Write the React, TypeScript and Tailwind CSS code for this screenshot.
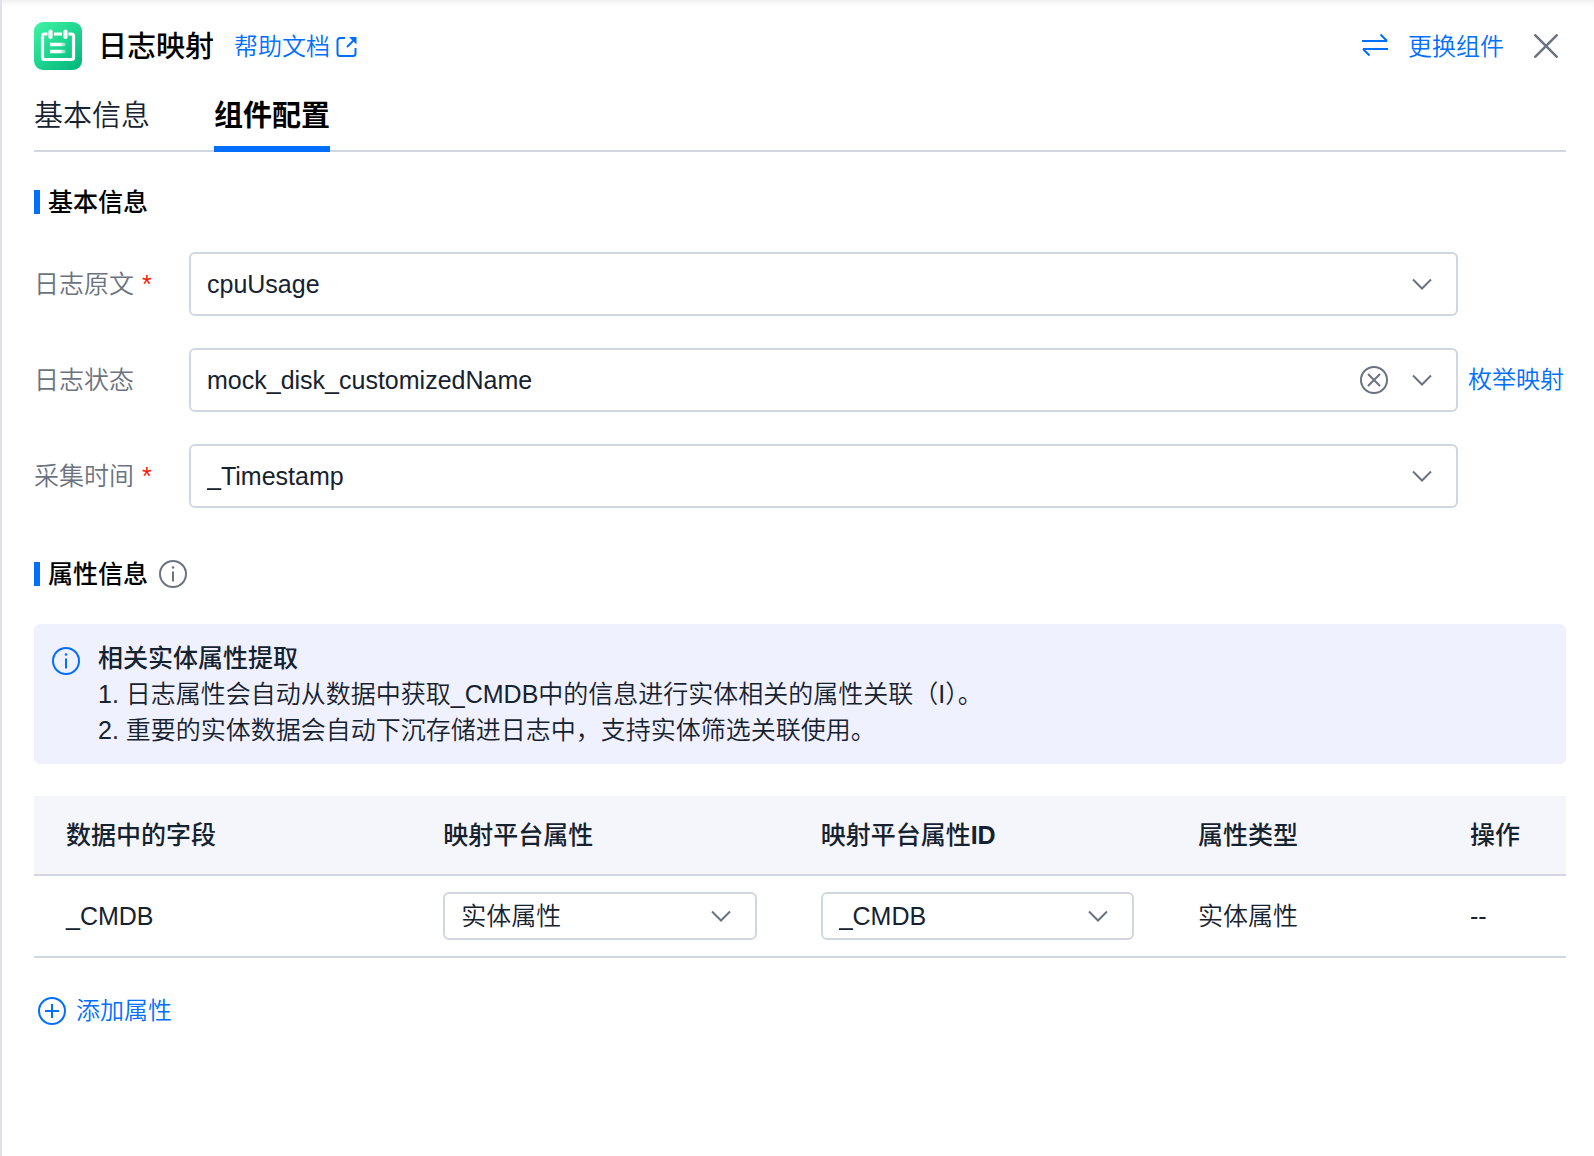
import React, { useState } from 'react';

const fontStack = "font-['Liberation_Sans','Noto_Sans_CJK_SC',sans-serif]";

const sourceFields = [
  { id: 'raw', label: '日志原文', required: true, value: 'cpuUsage' },
  { id: 'status', label: '日志状态', required: false, value: 'mock_disk_customizedName', clearable: true, link: '枚举映射' },
  { id: 'time', label: '采集时间', required: true, value: '_Timestamp' },
];

const attributes = [
  { field: '_CMDB', attr: '实体属性', attrId: '_CMDB', type: '实体属性' },
];

function LogoIcon() {
  return (
    <svg width="48" height="48" viewBox="0 0 48 48" fill="none" aria-hidden="true">
      <defs>
        <linearGradient id="logo-bg" x1="4" y1="0" x2="44" y2="48" gradientUnits="userSpaceOnUse">
          <stop stopColor="#3df2a4" />
          <stop offset="1" stopColor="#00b87c" />
        </linearGradient>
        <linearGradient id="logo-line" x1="16" y1="0" x2="32" y2="0" gradientUnits="userSpaceOnUse">
          <stop stopColor="#fff" />
          <stop offset="0.6" stopColor="#fff" />
          <stop offset="1" stopColor="#fff" stopOpacity="0.3" />
        </linearGradient>
      </defs>
      <rect width="48" height="48" rx="9" fill="url(#logo-bg)" />
      <path
        d="M13.5 12H10.5a2 2 0 0 0-2 2v21.500a2 2 0 0 0 2 2h27a2 2 0 0 0 2-2V14a2 2 0 0 0-2-2h-3M20 12h8"
        stroke="#fff"
        strokeWidth="3.200"
      />
      <path d="M16.500 9.500v5.500M31.500 9.500v5.500" stroke="#fff" strokeWidth="4.200" strokeLinecap="round" />
      <path d="M16 22.500h15.500M16 29.500h15.500" stroke="url(#logo-line)" strokeWidth="3.400" />
    </svg>
  );
}

function ExternalIcon() {
  return (
    <svg width="22" height="22" viewBox="0 0 22 22" fill="none" stroke="currentColor" strokeWidth="2" aria-hidden="true">
      <path d="M9 2H4a2.500 2.500 0 0 0-2.500 2.500v13A2.500 2.500 0 0 0 4 20h13a2.500 2.500 0 0 0 2.500-2.500V12" />
      <path d="M11 11l7-7" />
      <path d="M13 1h7.500v7.500z" fill="currentColor" stroke="none" />
    </svg>
  );
}

function SwapIcon() {
  return (
    <svg width="26" height="28" viewBox="0 0 26 28" fill="none" stroke="currentColor" strokeWidth="2" aria-hidden="true">
      <path d="M0 8h25M18.500 1.500L25 8M26 16H1M7.500 22.500L1 16" />
    </svg>
  );
}

function ChevronIcon() {
  return (
    <svg width="20" height="12" viewBox="0 0 20 12" fill="none" stroke="currentColor" strokeWidth="2" aria-hidden="true">
      <path d="M1 1.500l9 9 9-9" />
    </svg>
  );
}

function InfoIcon() {
  return (
    <svg width="28" height="28" viewBox="0 0 28 28" fill="none" stroke="currentColor" strokeWidth="2" aria-hidden="true">
      <circle cx="14" cy="14" r="13" />
      <path d="M14 11.500v10" />
      <circle cx="14" cy="7.500" r="1.300" fill="currentColor" stroke="none" />
    </svg>
  );
}

function SectionTitle({ children }: { children: React.ReactNode }) {
  return (
    <h2 className="flex items-center text-[25px] leading-9 font-medium text-black">
      <span className="mr-2 h-6 w-1.5 bg-[#006eff]" />
      {children}
    </h2>
  );
}

export default function App() {
  const [tab, setTab] = useState('config');
  const [values, setValues] = useState<Record<string, string>>({
    raw: 'cpuUsage',
    status: 'mock_disk_customizedName',
    time: '_Timestamp',
  });

  const tabs = [
    { id: 'basic', name: '基本信息' },
    { id: 'config', name: '组件配置' },
  ];

  return (
    <div className={`${fontStack} min-h-screen border-l-2 border-[#e1e2e9] bg-white pr-7 pl-8 text-[25px] leading-9 font-[350] text-[#16222f] shadow-[inset_0_6px_6px_-4px_rgba(0,0,0,0.08)]`}>
      <header className="flex items-center pt-[22px]">
        <LogoIcon />
        <h1 className="ml-4 pt-0.5 text-[29px] font-medium text-black">日志映射</h1>
        <a href="#help" className="ml-5 flex items-center gap-1.5 pt-0.5 text-2xl text-[#006eff]">
          帮助文档
          <ExternalIcon />
        </a>
        <button type="button" className="ml-auto flex items-center gap-5 pt-0.5 text-2xl text-[#006eff]">
          <SwapIcon />
          更换组件
        </button>
        <button type="button" aria-label="关闭" className="mr-2 ml-[30px] text-[#6b7380]">
          <svg width="24" height="24" viewBox="0 0 24 24" fill="none" stroke="currentColor" strokeWidth="2.500">
            <path d="M.5.5l23 23M23.500.5l-23 23" />
          </svg>
        </button>
      </header>

      <nav className="flex gap-16 border-b-2 border-[#d2d6e1] text-[29px]" role="tablist">
        {tabs.map((t) => (
          <button
            key={t.id}
            type="button"
            role="tab"
            aria-selected={tab === t.id}
            onClick={() => setTab(t.id)}
            className={`-mb-0.5 border-b-6 pt-[26px] pb-2.5 leading-10 ${tab === t.id ? 'border-[#006eff] font-bold text-black' : 'border-transparent'}`}
          >
            {t.name}
          </button>
        ))}
      </nav>

      <section className="pt-8">
        <SectionTitle>基本信息</SectionTitle>
        <div className="mt-8 flex flex-col gap-8">
          {sourceFields.map((f) => (
            <div key={f.id} className="flex items-center">
              <label htmlFor={f.id} className="w-[155px] shrink-0 text-[#6b7380]">
                {f.label}
                {f.required && <span className="ml-2 text-[#ff1a0a]">*</span>}
              </label>
              <div className="relative flex-1">
                <select
                  id={f.id}
                  value={values[f.id]}
                  onChange={(e) => setValues({ ...values, [f.id]: e.target.value })}
                  className="block h-16 w-full appearance-none rounded-md border-2 border-[#d2d6e1] bg-white px-4"
                >
                  <option value=""></option>
                  <option value={f.value}>{f.value}</option>
                </select>
                <div className="pointer-events-none absolute inset-y-0 right-[26px] flex items-center gap-6 text-[#6b7380]">
                  {f.clearable && (
                    <button
                      type="button"
                      aria-label="清除"
                      className="pointer-events-auto"
                      onClick={() => setValues({ ...values, [f.id]: '' })}
                    >
                      <svg width="28" height="28" viewBox="0 0 28 28" fill="none" stroke="currentColor" strokeWidth="2">
                        <circle cx="14" cy="14" r="13" />
                        <path d="M8 8l12 12M20 8L8 20" />
                      </svg>
                    </button>
                  )}
                  <ChevronIcon />
                </div>
              </div>
              <div className="w-[108px] shrink-0 pl-2.5 text-2xl leading-9">
                {f.link && <a href="#enum" className="text-[#006eff]">{f.link}</a>}
              </div>
            </div>
          ))}
        </div>
      </section>

      <section className="pt-12">
        <SectionTitle>
          属性信息
          <button type="button" aria-label="说明" className="ml-[11px] text-[#6b7380]">
            <InfoIcon />
          </button>
        </SectionTitle>

        <div className="mt-8 flex rounded-md bg-[#f0f1ff] px-[18px] py-4">
          <span className="mt-[7px] mr-[18px] text-[#006eff]">
            <InfoIcon />
          </span>
          <div>
            <p className="font-medium">相关实体属性提取</p>
            <p>1. 日志属性会自动从数据中获取_CMDB中的信息进行实体相关的属性关联（I）。</p>
            <p>2. 重要的实体数据会自动下沉存储进日志中，支持实体筛选关联使用。</p>
          </div>
        </div>

        <table className="mt-8 w-full table-fixed border-collapse text-left">
          <thead>
            <tr className="h-[79px] border-b-2 border-[#d2d6e1] bg-[#f5f6fb]">
              <th className="px-8 font-medium">数据中的字段</th>
              <th className="px-8 font-medium">映射平台属性</th>
              <th className="px-8 font-medium">映射平台属性<b>ID</b></th>
              <th className="w-[272px] px-8 font-medium">属性类型</th>
              <th className="w-32 px-8 font-medium">操作</th>
            </tr>
          </thead>
          <tbody>
            {attributes.map((row, idx) => (
              <tr key={idx} className="border-b-2 border-[#d2d6e1]">
                <td className="px-8 py-4">{row.field}</td>
                {[row.attr, row.attrId].map((v, i) => (
                  <td key={i} className="px-8 py-4">
                    <div className="relative">
                      <select
                        aria-label={i === 0 ? '映射平台属性' : '映射平台属性ID'}
                        defaultValue={v}
                        className="block h-12 w-full appearance-none rounded-md border-2 border-[#d2d6e1] bg-white px-4"
                      >
                        <option>{v}</option>
                      </select>
                      <div className="pointer-events-none absolute inset-y-0 right-[26px] flex items-center text-[#6b7380]">
                        <ChevronIcon />
                      </div>
                    </div>
                  </td>
                ))}
                <td className="px-8 py-4">{row.type}</td>
                <td className="px-8 py-4">--</td>
              </tr>
            ))}
          </tbody>
        </table>

        <button type="button" className="mt-[35px] ml-1 flex items-center gap-2.5 text-2xl leading-9 text-[#006eff]">
          <svg width="28" height="28" viewBox="0 0 28 28" fill="none" stroke="currentColor" strokeWidth="2" aria-hidden="true">
            <circle cx="14" cy="14" r="13" />
            <path d="M14 7v14M7 14h14" />
          </svg>
          添加属性
        </button>
      </section>
    </div>
  );
}
